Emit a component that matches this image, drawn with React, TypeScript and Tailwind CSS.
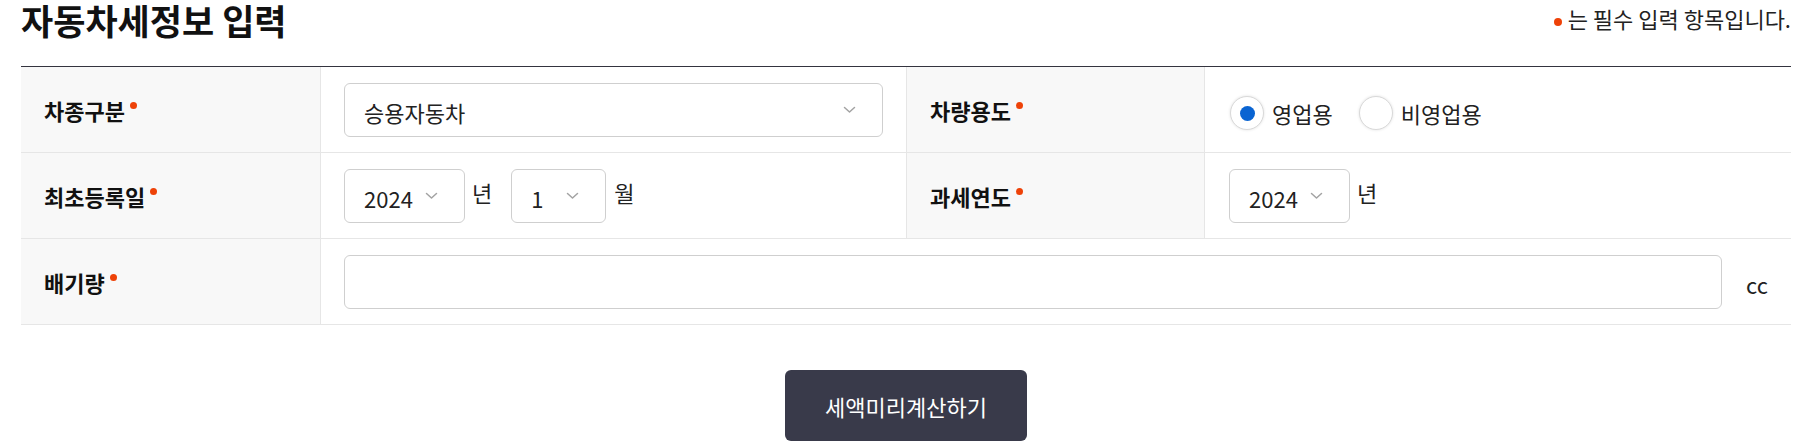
import type { ReactNode } from 'react';

function RequiredDot({ className = '' }: { className?: string }) {
  return <span className={`block w-[7px] h-[7px] shrink-0 rounded-full bg-[#ee4208] ${className}`} />;
}

function Chevron({ className = '' }: { className?: string }) {
  return (
    <svg width="13" height="8" viewBox="0 0 13 8" fill="none" className={className}>
      <polyline points="1.5,1.5 6.5,6 11.5,1.5" stroke="#a3a3a3" strokeWidth="1.5" strokeLinecap="round" strokeLinejoin="round" />
    </svg>
  );
}

function Label({ children, divider = false }: { children: ReactNode; divider?: boolean }) {
  return (
    <div
      className={`flex items-center h-[86px] bg-[#f8f8f8] border-b border-r border-[#e6e6e6] pl-[23px] ${
        divider ? 'border-l' : ''
      }`}
    >
      <div className="flex items-start gap-[5px]">
        <span className="text-[22px] leading-[30px] font-bold text-[#111]">{children}</span>
        <RequiredDot className="mt-[7px]" />
      </div>
    </div>
  );
}

function Select({ value, className = '' }: { value: string; className?: string }) {
  return (
    <div
      className={`relative flex items-center h-[54px] shrink-0 rounded-[6px] border border-[#cfcfcf] bg-white pl-[19px] pt-[4px] text-[22px] leading-[30px] text-[#222] ${className}`}
    >
      <span>{value}</span>
      <Chevron className="absolute right-[26px] top-1/2 -translate-y-1/2" />
    </div>
  );
}

function Suffix({ children, className = '' }: { children: ReactNode; className?: string }) {
  return <span className={`mt-[8px] text-[22px] leading-[30px] text-[#222] ${className}`}>{children}</span>;
}

function Radio({ label, checked = false }: { label: string; checked?: boolean }) {
  return (
    <label className="flex items-center gap-[8px]">
      <span className="flex items-center justify-center w-[34px] h-[34px] rounded-full border border-[#d9d9d9] bg-white shadow-[0_0_3px_rgba(0,0,0,0.12)]">
        {checked && <span className="block w-[15px] h-[15px] rounded-full bg-[#0a64d2]" />}
      </span>
      <span className="text-[22px] leading-[30px] text-[#222]">{label}</span>
    </label>
  );
}

export default function App() {
  return (
    <div className="w-[1803px] h-[447px] bg-white pl-[21px] pr-[12px] font-['Noto_Sans_CJK_KR','Noto_Sans',sans-serif]">
      {/* 제목 */}
      <div className="flex justify-between items-start h-[66px]">
        <h1 className="text-[35px] leading-[40px] font-bold text-[#111]">자동차세정보 입력</h1>
        <div className="flex items-center gap-[6px] pt-[1px]">
          <RequiredDot className="mt-[7px] w-[8px] h-[8px]" />
          <span className="text-[22px] leading-[34px] text-[#222]">는 필수 입력 항목입니다.</span>
        </div>
      </div>

      {/* 입력 폼 */}
      <div className="grid grid-cols-[300px_585px_299px_1fr] border-t border-[#34343f]">
        <Label>차종구분</Label>
        <div className="flex items-center h-[86px] border-b border-[#e6e6e6] px-[23px]">
          <Select value="승용자동차" className="w-full" />
        </div>
        <Label divider>차량용도</Label>
        <div className="flex items-center h-[86px] border-b border-[#e6e6e6] pl-[25px]">
          <div className="flex items-center gap-[26px] mt-[7px]">
            <Radio label="영업용" checked />
            <Radio label="비영업용" />
          </div>
        </div>

        <Label>최초등록일</Label>
        <div className="flex items-center h-[86px] border-b border-[#e6e6e6] pl-[23px]">
          <div className="flex items-start">
            <Select value="2024" className="w-[121px]" />
            <Suffix className="ml-[7px]">년</Suffix>
            <Select value="1" className="w-[95px] ml-[19px]" />
            <Suffix className="ml-[8px]">월</Suffix>
          </div>
        </div>
        <Label divider>과세연도</Label>
        <div className="flex items-center h-[86px] border-b border-[#e6e6e6] pl-[24px]">
          <div className="flex items-start">
            <Select value="2024" className="w-[121px]" />
            <Suffix className="ml-[7px]">년</Suffix>
          </div>
        </div>

        <Label>배기량</Label>
        <div className="col-span-3 flex items-center gap-[24px] h-[86px] border-b border-[#e6e6e6] pl-[23px] pr-[23px]">
          <input type="text" className="flex-1 h-[54px] rounded-[6px] border border-[#cfcfcf] bg-white px-[19px] text-[22px] outline-none" />
          <span className="mt-[4px] text-[22px] leading-[30px] text-[#222]">cc</span>
        </div>
      </div>

      {/* 계산 버튼 */}
      <div className="flex justify-center mt-[45px]">
        <button className="w-[242px] h-[71px] rounded-[6px] bg-[#393a4a] text-white text-[22px] leading-[30px]">
          세액미리계산하기
        </button>
      </div>
    </div>
  );
}
